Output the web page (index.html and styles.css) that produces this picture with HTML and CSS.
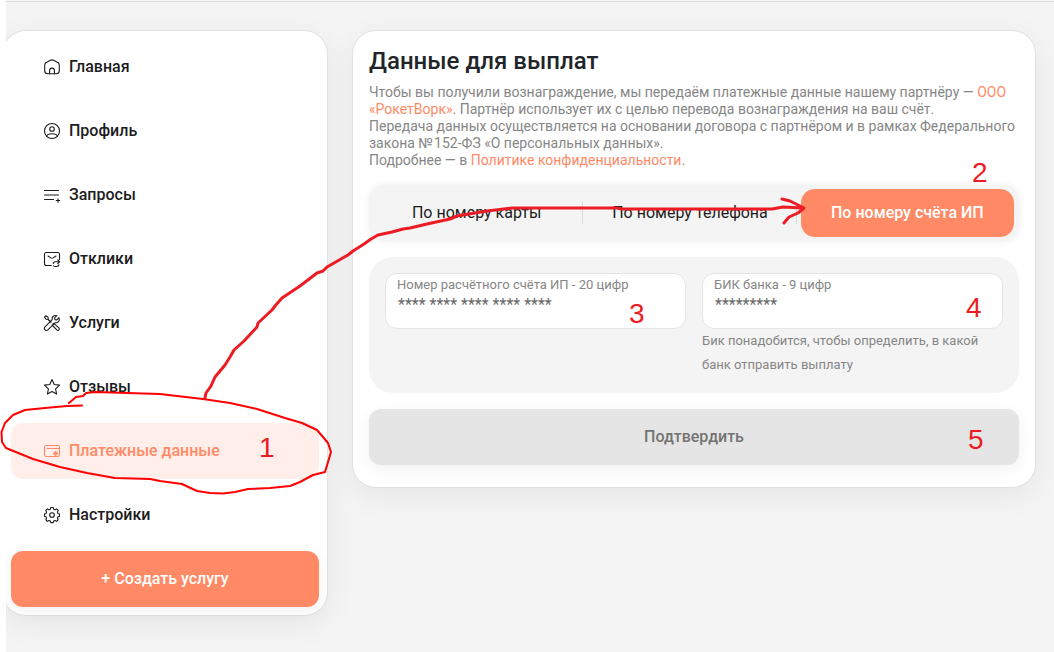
FILE: index.html
```html
<!DOCTYPE html>
<html lang="ru">
<head>
<meta charset="utf-8">
<meta name="viewport" content="width=device-width, initial-scale=1">
<title>Данные для выплат</title>
<link rel="stylesheet" href="styles.css">
</head>
<body>
<div class="page">
  <nav class="card sidebar" aria-label="Меню">
    <a class="nav-item" href="#home">
      <svg class="icon" viewBox="0 0 18 18" aria-hidden="true"><path d="M1.700 7.100c0-1 .4-1.700 1.200-2.300L7.400 2.300c1-.5 2.200-.5 3.200 0l4.500 2.500c.8.6 1.200 1.300 1.200 2.300v5.700c0 1.900-1.100 3-3 3H4.700c-1.900 0-3-1.100-3-3z"/><path d="M6.600 15.700v-3.200c0-1.500 1-2.400 2.400-2.400s2.400.9 2.400 2.400v3.200"/></svg>
      Главная
    </a>
    <a class="nav-item" href="#profile">
      <svg class="icon" viewBox="0 0 18 18" aria-hidden="true"><circle cx="9" cy="9" r="7.500"/><circle cx="9" cy="7" r="2.300"/><path d="M3.800 14.200c.4-1.900 2-2.400 5.200-2.400s4.800.5 5.200 2.400"/></svg>
      Профиль
    </a>
    <a class="nav-item" href="#requests">
      <svg class="icon" viewBox="0 0 18 18" aria-hidden="true"><path d="M1.500 4.500h14M1.500 9h14M1.500 13.500h9M15 12.700v3.600M13.200 14.500h3.600"/></svg>
      Запросы
    </a>
    <a class="nav-item" href="#replies">
      <svg class="icon" viewBox="0 0 18 18" aria-hidden="true"><path d="M8.300 15.500H3.500c-1.200 0-2-.8-2-2v-9c0-1.200.8-2 2-2h11c1.200 0 2 .8 2 2v5"/><path d="m5 6 2.800 1.900c.8.500 1.600.5 2.400 0L13 6"/><path d="m14.700 9.800 2 1.900-2 1.900M16.500 11.700h-4c-1.500 0-2.200.8-2.200 1.800M10.500 15.800c.6.500 1.100.7 1.700.7h1.600c1.200 0 2-.7 2.200-1.800"/></svg>
      Отклики
    </a>
    <a class="nav-item" href="#services">
      <svg class="icon" viewBox="0 0 18 18" aria-hidden="true"><path d="M8.100 8.100 5.300 5.300 5 3.300 2.900 1.700 1.500 3.100 3 5.200l2.100.3 2.800 2.800M10 9.900l1.200-.3 4.600 4.200c1.500 1.400-.5 3.400-2 2L9.500 11.500z"/><path d="M15.900 3.700 13.700 6l-1.700-.4-.4-1.700 2.300-2.200c-2.800-1-5.300 1.200-4.700 3.900L2 12.900c-1.900 1.900 1 4.900 2.900 2.900l7.300-7.100c2.900.6 5-2.200 3.700-5z"/></svg>
      Услуги
    </a>
    <a class="nav-item" href="#reviews">
      <svg class="icon" viewBox="0 0 18 18" aria-hidden="true"><path d="m9 1.600 2.200 4.900 5.300.6-3.900 3.700 1 5.300L9 13.500l-4.600 2.600 1-5.300-3.900-3.700 5.300-.6z"/></svg>
      Отзывы
    </a>
    <a class="nav-item nav-item-active" href="#payments" aria-current="page">
      <svg class="icon" viewBox="0 0 18 18" aria-hidden="true"><rect x="1.500" y="3.500" width="15" height="11" rx="1.800"/><path d="M4 6.500h12.500M11 11.500h3M12.500 10v3"/><circle cx="12.500" cy="11.500" r="1.700"/></svg>
      Платежные данные
    </a>
    <a class="nav-item" href="#settings">
      <svg class="icon" viewBox="0 0 18 18" aria-hidden="true"><path d="M7.800 1.500h2.400l.5 1.700 1.300.6 1.700-.9 1.500 1.500-.8 1.700.6 1.300 1.500.5v2.400l-1.500.4-.6 1.400.8 1.600-1.600 1.600-1.600-.8-1.300.5-.5 1.600H7.800l-.5-1.600-1.300-.5-1.700.8-1.500-1.600.8-1.600-.6-1.400-1.500-.4V7.900L3 7.400l.6-1.300-.8-1.700 1.500-1.500 1.700.9 1.300-.6z"/><circle cx="9" cy="9" r="2.300"/></svg>
      Настройки
    </a>
    <button class="button button-primary" type="button">+ Создать услугу</button>
  </nav>

  <main class="card content">
    <h1 class="title">Данные для выплат</h1>
    <p class="intro">Чтобы вы получили вознаграждение, мы передаём платежные данные нашему партнёру — <a class="link" href="#partner">ООО «РокетВорк»</a>. Партнёр использует их с целью перевода вознаграждения на ваш счёт.<br>Передача данных осуществляется на основании договора с партнёром и в рамках Федерального закона №&#8202;152-ФЗ «О персональных данных».<br>Подробнее — в <a class="link" href="#privacy">Политике конфиденциальности</a>.</p>

    <div class="tabs" role="tablist">
      <button class="tab" type="button" role="tab" aria-selected="false">По номеру карты</button>
      <button class="tab" type="button" role="tab" aria-selected="false">По номеру телефона</button>
      <button class="tab tab-active" type="button" role="tab" aria-selected="true">По номеру счёта ИП</button>
    </div>

    <form class="form">
      <div class="panel">
        <div class="field">
          <div class="field-box">
            <label class="field-label" for="account">Номер расчётного счёта ИП - 20 цифр</label>
            <input class="field-input" id="account" type="text" placeholder="**** **** **** **** ****">
          </div>
        </div>
        <div class="field">
          <div class="field-box">
            <label class="field-label" for="bik">БИК банка - 9 цифр</label>
            <input class="field-input" id="bik" type="text" placeholder="*********" aria-describedby="bik-hint">
          </div>
          <p class="hint" id="bik-hint">Бик понадобится, чтобы определить, в какой банк отправить выплату</p>
        </div>
      </div>
      <button class="button button-disabled" type="submit" disabled>Подтвердить</button>
    </form>
  </main>
</div>

<svg class="marks" width="1054" height="652" viewBox="0 0 1054 652">
  <path class="loop" d="M82 405.500 67 406 45 408 25 410 13 415 5 423 1.500 432 2 442 6 448 33 459 60 467 87 473 115 478 150 479 160 481 182 484 197 491 210 493 223 493.500 235 492 248 489 270 488 290 486 300 482 313 475 325 472 328 462 331 452 328 443 323 437 317 430 302 423 285 418 257 409 230 403 203 399 160 394 127 393 95 392 86 393 83 396 76 397 69 403"/>
  <path class="arrow" d="M205 398 206 393 211 386 215 377 225 365 230 357 234 350 244 341 257 327 258 323 272 310 275 306 282 298 300 286 317 273 323 271 327 267 348 255 353 251 364 244 371 239 378 235 392 232 403 229 410 228 427 224 450 219 457 216 487 211 513 208 617 208 622 209 772 209 783 207 803 208M782 199 790 201 804 208 798 213 789 217 784 223"/>
  <g class="digits">
    <text x="259" y="457">1</text>
    <text x="972" y="182">2</text>
    <text x="629" y="323">3</text>
    <text x="966" y="317">4</text>
    <text x="968" y="449">5</text>
  </g>
</svg>
</body>
</html>
```

FILE: styles.css
```css
* {
  box-sizing: border-box;
}

body {
  position: relative;
  margin: 0;
  padding-left: 6px;
  background: #fff;
  color: #1c1c1c;
  font-family: Roboto, "Liberation Sans", sans-serif;
}

button,
input {
  font-family: inherit;
}

.page {
  display: flex;
  align-items: flex-start;
  gap: 24px;
  min-height: 100vh;
  padding: 30px 18px 28px 0;
  overflow: hidden;
  background: linear-gradient(#dedede, #dedede) 0 1px / 100% 1px no-repeat #f4f4f4;
}

.card {
  border: 1px solid #e1e1e1;
  border-radius: 24px;
  background: #fff;
  box-shadow: 0 8px 32px rgba(0, 0, 0, 0.06);
}

.sidebar {
  display: flex;
  flex: 0 0 326px;
  flex-direction: column;
  gap: 8px;
  margin-left: -4px;
  padding: 8px;
}

.nav-item {
  display: flex;
  align-items: center;
  gap: 8px;
  height: 56px;
  padding: 0 32px 2px;
  border-radius: 12px;
  color: #1c1c1c;
  font-size: 16px;
  font-weight: 500;
  text-decoration: none;
}

.nav-item-active {
  background: #ffeeea;
  color: #ff8a65;
}

.icon {
  width: 18px;
  height: 18px;
  margin-top: 2px;
  fill: none;
  stroke: currentColor;
  stroke-width: 1.1;
  stroke-linecap: round;
  stroke-linejoin: round;
}

.button {
  width: 100%;
  height: 56px;
  padding: 0 0 2px;
  border: 0;
  border-radius: 12px;
  box-shadow: 0 4px 16px rgba(0, 0, 0, 0.06);
  font-size: 16px;
  font-weight: 500;
}

.button-primary {
  background: #ff8a65;
  color: #fff;
}

.button-disabled {
  background: #e5e5e5;
  color: #737373;
}

.content {
  flex: 1;
  min-width: 0;
  padding: 16px 16px 22px;
}

.title {
  margin: 0 0 8px;
  color: #212529;
  font-size: 24px;
  font-weight: 500;
  line-height: 29px;
}

.intro {
  margin: 0 0 16px;
  color: #868686;
  font-size: 14px;
  line-height: 17px;
}

.link {
  color: #ff8a65;
  text-decoration: none;
}

.tabs {
  display: flex;
  margin-bottom: 16px;
  padding: 4px 5px 4px 1px;
  border-radius: 16px;
  background: #f4f4f4;
  box-shadow: 0 0 8px rgba(0, 0, 0, 0.07);
}

.tab {
  flex: 1 1 0;
  height: 48px;
  padding: 0 0 2px;
  border: 0;
  background: linear-gradient(#d9d9d9, #d9d9d9) right center / 1px 22px no-repeat;
  color: #1c1c1c;
  font-size: 16px;
}

.tab-active {
  margin-left: 4px;
  border-radius: 14px;
  background: #ff8a65;
  color: #fff;
  font-weight: 500;
}

.panel {
  display: grid;
  grid-template-columns: 1fr 1fr;
  gap: 16px;
  margin-bottom: 16px;
  padding: 16px;
  border-radius: 24px;
  background: #f4f4f4;
}

.field-box {
  display: flex;
  flex-direction: column;
  height: 56px;
  padding: 2px 11px;
  border: 1px solid #e5e5e5;
  border-radius: 12px;
  background: #fff;
}

.field-label {
  color: #868686;
  font-size: 13px;
  line-height: 18px;
}

.field-input {
  width: 100%;
  height: 20px;
  padding: 0 1px;
  border: 0;
  outline: 0;
  background: transparent;
  color: #1c1c1c;
  font-size: 16px;
}

.field-input::placeholder {
  color: #666;
}

.hint {
  margin: 0;
  color: #868686;
  font-size: 13px;
  line-height: 24px;
}

.marks {
  position: absolute;
  top: 0;
  left: 0;
  pointer-events: none;
}

.loop,
.arrow {
  fill: none;
  stroke-linecap: round;
  stroke-linejoin: round;
}

.loop {
  stroke: #f00;
  stroke-width: 2;
}

.arrow {
  stroke: #ed1c24;
  stroke-width: 3;
}

.digits {
  fill: #ed1c24;
  font-family: "Liberation Sans", Arial, sans-serif;
  font-size: 28px;
}
```
